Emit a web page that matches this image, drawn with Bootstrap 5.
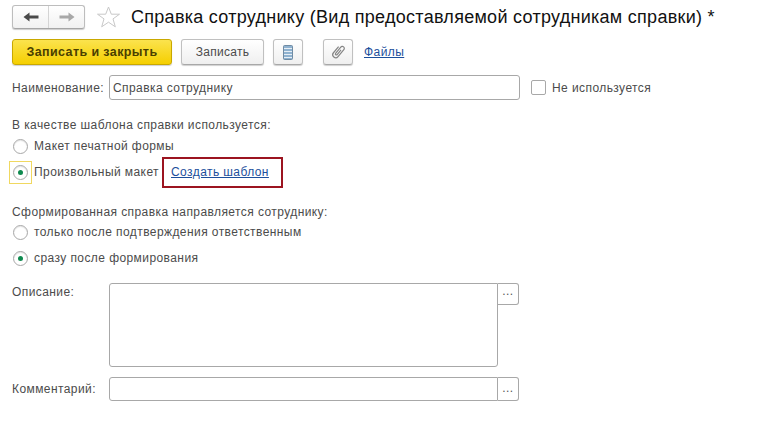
<!DOCTYPE html>
<html lang="ru">
<head>
  <meta charset="UTF-8">
  <meta name="viewport" content="width=device-width, initial-scale=1">
  <title>Справка сотруднику</title>
  <link href="https://cdn.jsdelivr.net/npm/bootstrap@5.3.2/dist/css/bootstrap.min.css" rel="stylesheet">
  <style>
    body { background: #fff; color: #4b4b4b; font-family: "Liberation Sans", Arial, sans-serif; font-size: 12px; line-height: 14px; letter-spacing: .42px; }
    .page-wrap { width: 774px; height: 444px; padding: 5px 0 0 12px; overflow: hidden; }
    .head-row { height: 24px; margin-bottom: 10px; }
    .nav-group { width: 73px; height: 24px; border: 1px solid #bdbdbd; border-bottom-color: #a5a5a5; border-radius: 3px; background: linear-gradient(#fff, #f1f1f1); box-shadow: 0 1px 1px #ccc; }
    .nav-cell { flex: 1; height: 100%; }
    .nav-cell + .nav-cell { border-left: 1px solid #d4d4d4; }
    .fav-star { margin-left: 12px; margin-right: 11px; }
    .doc-title { font-size: 18px; line-height: 24px; color: #111; white-space: nowrap; letter-spacing: .28px; }
    .cmd-row { height: 26px; margin-bottom: 10px; }
    .cmd-btn { height: 26px; border: 1px solid #c0c0c0; border-bottom-color: #a8a8a8; border-radius: 3px; background: linear-gradient(#fff, #efefef); box-shadow: 0 1px 1px #d0d0d0; color: #4b4b4b; font-size: 12px; letter-spacing: .3px; padding: 0; }
    .cmd-main { width: 160px; margin-right: 9px; background: linear-gradient(#fbe34e, #f5cf00); border-color: #c9a800; color: #4a3f00; font-weight: 700; font-size: 12.5px; letter-spacing: .39px; }
    .cmd-save { width: 83px; margin-right: 9px; }
    .cmd-icon { width: 30px; }
    .clip-btn { margin-left: 20px; margin-right: 11px; }
    .files-link, .tpl-link { color: #1c4f9c; }
    .field-label { width: 97px; flex-shrink: 0; }
    .name-row { height: 25px; margin-bottom: 18px; }
    .text-box { height: 25px; border: 1px solid #a8a8a8; border-radius: 3px; padding: 0 3px; color: #4b4b4b; background: #fff; }
    .box-name { width: 411px; }
    .check-box { width: 15px; height: 15px; border: 1px solid #a8a8a8; border-radius: 2px; margin-left: 11px; margin-right: 6px; }
    .group-title { height: 14px; }
    .first-title { margin-top: 1px; margin-bottom: 1px; }
    .radio-row { position: relative; height: 26px; }
    .radio-dot { width: 15px; height: 15px; border: 1px solid #a8a8a8; border-radius: 50%; margin-left: 1px; margin-right: 6px; flex-shrink: 0; box-shadow: inset 0 1px 1px #e4e4e4; }
    .radio-dot.is-on::after { content: ""; width: 5px; height: 5px; border-radius: 50%; background: #0f8a4f; }
    .focus-frame { border: 1px solid #f0d860; position: absolute; left: -3px; top: 2px; width: 23px; height: 23px; }
    .tpl-frame { border: 2px solid #9c1420; height: 31px; width: 121px; margin-left: 3px; padding-left: 7px; flex-shrink: 0; }
    .gap-one { height: 20px; }
    .gap-two { height: 12px; }
    .memo-row { height: 84px; margin-bottom: 10px; }
    .memo-label { padding-top: 2px; }
    .box-memo { width: 389px; height: 84px; border: 1px solid #a8a8a8; border-radius: 0 0 3px 3px; border-top-left-radius: 3px; }
    .dots-btn { width: 21px; height: 22px; border: 1px solid #a8a8a8; border-left: 0; border-radius: 0 3px 3px 0; text-align: center; line-height: 14px; color: #555; }
    .note-row { height: 24px; }
    .box-note { width: 389px; height: 24px; border-radius: 3px 0 0 3px; }
    .note-row .dots-btn { height: 24px; border-left: 0; padding-top: 3px; }
  </style>
</head>
<body>
<div class="page-wrap">
  <div class="head-row d-flex align-items-center">
    <div class="nav-group d-flex">
      <div class="nav-cell d-flex align-items-center justify-content-center">
        <svg width="16" height="10" viewBox="0 0 16 10"><path d="M.5 5 6.500 .5V3.500H15.500V6.500H6.500V9.500Z" fill="#4a4a4a"/></svg>
      </div>
      <div class="nav-cell d-flex align-items-center justify-content-center">
        <svg width="16" height="10" viewBox="0 0 16 10"><path d="M15.500 5 9.500 .5V3.500H.5V6.500H9.500V9.500Z" fill="#a8a8a8"/></svg>
      </div>
    </div>
    <svg class="fav-star" width="23" height="22" viewBox="0 0 23 22"><path d="M11.500 1 14.300 8.200H22.500L16 12.900 18.300 20.800 11.500 16.200 4.700 20.800 7 12.900 .5 8.200H8.700Z" fill="#fff" stroke="#c8c8c8"/></svg>
    <div class="doc-title">Справка сотруднику (Вид предоставляемой сотрудникам справки) *</div>
  </div>

  <div class="cmd-row d-flex align-items-center">
    <button type="button" class="cmd-btn cmd-main">Записать и закрыть</button>
    <button type="button" class="cmd-btn cmd-save">Записать</button>
    <button type="button" class="cmd-btn cmd-icon d-flex align-items-center justify-content-center">
      <svg width="10" height="15" viewBox="0 0 10 15"><rect x=".5" y=".5" width="9" height="14" rx="1" fill="#8fb2d0" stroke="#6f8ba3"/><path d="M1 3.500H9M1 6.500H9M1 9.500H9M1 12.500H9" stroke="#e6eef5"/></svg>
    </button>
    <button type="button" class="cmd-btn cmd-icon clip-btn d-flex align-items-center justify-content-center">
      <svg width="16" height="16" viewBox="0 0 16 16"><path transform="rotate(40 8 8) translate(2 -.5)" d="M3 4V12a3 3 0 0 0 6 0V3a2 2 0 0 0-4 0V11a1 1 0 0 0 2 0V5" fill="none" stroke="#858585" stroke-width="1.200"/></svg>
    </button>
    <a href="#" class="files-link">Файлы</a>
  </div>

  <div class="name-row d-flex align-items-center">
    <div class="field-label">Наименование:</div>
    <div class="text-box box-name d-flex align-items-center">Справка сотруднику</div>
    <div class="check-box"></div>
    <div>Не используется</div>
  </div>

  <div class="group-title first-title">В качестве шаблона справки используется:</div>
  <div class="radio-row d-flex align-items-center">
    <span class="radio-dot d-flex align-items-center justify-content-center"></span>
    <span>Макет печатной формы</span>
  </div>
  <div class="radio-row d-flex align-items-center">
    <span class="focus-frame"></span>
    <span class="radio-dot is-on d-flex align-items-center justify-content-center"></span>
    <span>Произвольный макет</span>
    <div class="tpl-frame d-flex align-items-center"><a href="#" class="tpl-link">Создать шаблон</a></div>
  </div>

  <div class="gap-one"></div>
  <div class="group-title">Сформированная справка направляется сотруднику:</div>
  <div class="radio-row d-flex align-items-center">
    <span class="radio-dot d-flex align-items-center justify-content-center"></span>
    <span>только после подтверждения ответственным</span>
  </div>
  <div class="radio-row d-flex align-items-center">
    <span class="radio-dot is-on d-flex align-items-center justify-content-center"></span>
    <span>сразу после формирования</span>
  </div>
  <div class="gap-two"></div>

  <div class="memo-row d-flex">
    <div class="field-label memo-label">Описание:</div>
    <div class="text-box box-memo"></div>
    <div class="dots-btn">...</div>
  </div>
  <div class="note-row d-flex align-items-center">
    <div class="field-label">Комментарий:</div>
    <div class="text-box box-note"></div>
    <div class="dots-btn">...</div>
  </div>
</div>
<script src="https://cdn.jsdelivr.net/npm/bootstrap@5.3.2/dist/js/bootstrap.bundle.min.js"></script>
</body>
</html>
